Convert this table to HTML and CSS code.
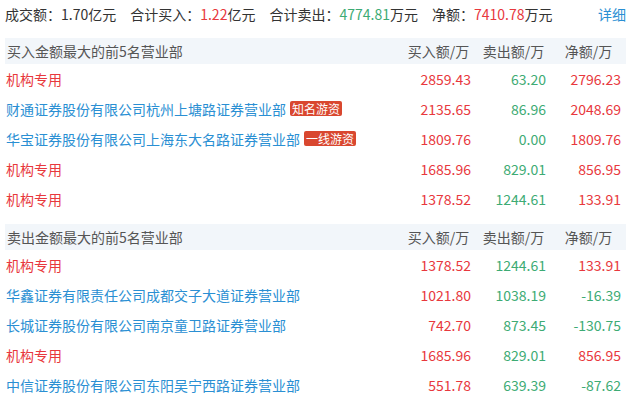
FILE: index.html
```html
<!DOCTYPE html>
<html>
<head>
    <meta charset="utf-8">
    <title>龙虎榜 - 营业部明细</title>
    <link rel="stylesheet" href="styles.css">
</head>
<body>
    <div class="summary">
        <span class="item">成交额：<span class="dark">1.70</span>亿元</span>
        <span class="item">合计买入：<span class="red">1.22</span>亿元</span>
        <span class="item">合计卖出：<span class="green">4774.81</span>万元</span>
        <span class="item">净额：<span class="red">7410.78</span>万元</span>
        <a class="more" href="#">详细</a>
    </div>

    <div class="board">
        <div class="row head">
            <div class="name">买入金额最大的前5名营业部</div>
            <div class="col">买入额/万</div>
            <div class="col">卖出额/万</div>
            <div class="col">净额/万</div>
        </div>
        <div class="row">
            <div class="name"><span class="red">机构专用</span></div>
            <div class="num red">2859.43</div>
            <div class="num green">63.20</div>
            <div class="num red">2796.23</div>
        </div>
        <div class="row">
            <div class="name"><a href="#">财通证券股份有限公司杭州上塘路证券营业部</a><span class="tag">知名游资</span></div>
            <div class="num red">2135.65</div>
            <div class="num green">86.96</div>
            <div class="num red">2048.69</div>
        </div>
        <div class="row">
            <div class="name"><a href="#">华宝证券股份有限公司上海东大名路证券营业部</a><span class="tag">一线游资</span></div>
            <div class="num red">1809.76</div>
            <div class="num green">0.00</div>
            <div class="num red">1809.76</div>
        </div>
        <div class="row">
            <div class="name"><span class="red">机构专用</span></div>
            <div class="num red">1685.96</div>
            <div class="num green">829.01</div>
            <div class="num red">856.95</div>
        </div>
        <div class="row">
            <div class="name"><span class="red">机构专用</span></div>
            <div class="num red">1378.52</div>
            <div class="num green">1244.61</div>
            <div class="num red">133.91</div>
        </div>
    </div>

    <div class="board">
        <div class="row head">
            <div class="name">卖出金额最大的前5名营业部</div>
            <div class="col">买入额/万</div>
            <div class="col">卖出额/万</div>
            <div class="col">净额/万</div>
        </div>
        <div class="row">
            <div class="name"><span class="red">机构专用</span></div>
            <div class="num red">1378.52</div>
            <div class="num green">1244.61</div>
            <div class="num red">133.91</div>
        </div>
        <div class="row">
            <div class="name"><a href="#">华鑫证券有限责任公司成都交子大道证券营业部</a></div>
            <div class="num red">1021.80</div>
            <div class="num green">1038.19</div>
            <div class="num green">-16.39</div>
        </div>
        <div class="row">
            <div class="name"><a href="#">长城证券股份有限公司南京童卫路证券营业部</a></div>
            <div class="num red">742.70</div>
            <div class="num green">873.45</div>
            <div class="num green">-130.75</div>
        </div>
        <div class="row">
            <div class="name"><span class="red">机构专用</span></div>
            <div class="num red">1685.96</div>
            <div class="num green">829.01</div>
            <div class="num red">856.95</div>
        </div>
        <div class="row">
            <div class="name"><a href="#">中信证券股份有限公司东阳吴宁西路证券营业部</a></div>
            <div class="num red">551.78</div>
            <div class="num green">639.39</div>
            <div class="num green">-87.62</div>
        </div>
    </div>
</body>
</html>
```

FILE: styles.css
```css
body {
    margin: 0;
    padding: 0 7px 0 5px;
    font-family: "Microsoft YaHei", "Noto Sans CJK SC", sans-serif;
    font-size: 14px;
    color: #333;
    background: #fff;
}
a {
    color: #2a8fd3;
    text-decoration: none;
}
.red {
    color: #e8383d;
}
.green {
    color: #3dab74;
}
.dark {
    color: #333;
}
.summary {
    display: flex;
    height: 28px;
    line-height: 28px;
    white-space: nowrap;
}
.summary .item {
    margin-right: 14px;
}
.summary .more {
    margin-left: auto;
}
.board {
    margin-top: 10px;
}
.row {
    display: grid;
    grid-template-columns: 1fr 75px 75px 75px;
    height: 30px;
    line-height: 30px;
    white-space: nowrap;
}
.row.head {
    height: 26px;
    line-height: 26px;
    background: #f2f6fa;
    color: #555;
}
.row .name {
    padding-left: 1px;
}
.row.head .name {
    padding-left: 2px;
}
.col {
    text-align: center;
}
.num {
    text-align: right;
    padding-right: 5px;
}
.tag {
    display: inline-block;
    margin-left: 4px;
    padding: 0 2px;
    font-size: 12px;
    line-height: 15px;
    color: #fff;
    background: #d9472f;
    border-radius: 2px;
    vertical-align: 1px;
}
```
